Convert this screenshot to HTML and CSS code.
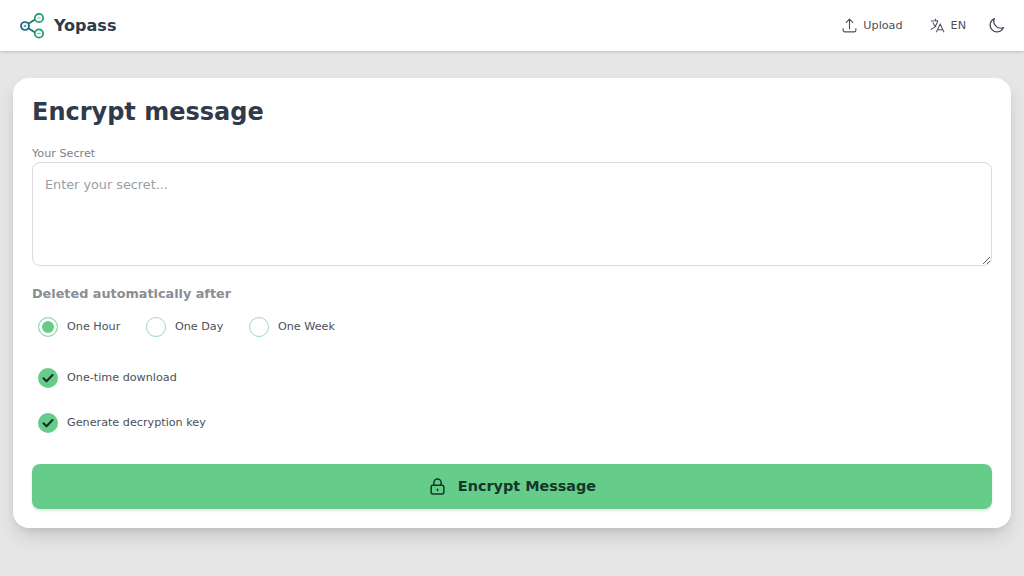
FILE: index.html
```html
<!DOCTYPE html>
<html lang="en">
<head>
<meta charset="utf-8">
<title>Yopass</title>
<link rel="stylesheet" href="styles.css">
</head>
<body>
<header class="navbar">
  <a class="brand">
    <svg class="logo" viewBox="0 0 26 26" width="26" height="26" fill="none" stroke-width="1.7">
      <path d="M8 11 L15 6.5 M8 15 L15 19.5" stroke="#1f6f6a"/>
      <circle cx="5" cy="13" r="4" stroke="#1d5f78" fill="#e3f1fa"/>
      <circle cx="19" cy="5" r="4.2" stroke="#1a9a72" fill="#f2fbf7"/>
      <circle cx="19" cy="20.5" r="4.2" stroke="#1a9a72" fill="#f2fbf7"/>
      <path d="M5 12v2" stroke="#1d5f78" stroke-width="1.2"/>
      <path d="M17.5 5h3M17.5 20.5h3" stroke="#7fbfa8" stroke-width="1"/>
    </svg>
    <span class="brand-name">Yopass</span>
  </a>
  <nav class="nav-actions">
    <a class="nav-item">
      <svg viewBox="0 0 24 24" width="17" height="17" fill="none" stroke="currentColor" stroke-width="1.6" stroke-linecap="round" stroke-linejoin="round"><path d="M3 16.5v2.3A2.2 2.2 0 0 0 5.2 21h13.6a2.2 2.2 0 0 0 2.2-2.2v-2.3M16.5 7.5 12 3 7.5 7.5M12 3v13.5"/></svg>
      <span>Upload</span>
    </a>
    <a class="nav-item">
      <svg viewBox="0 0 24 24" width="17" height="17" fill="none" stroke="currentColor" stroke-width="1.5" stroke-linecap="round" stroke-linejoin="round"><path d="m10.5 21 5.25-11.25L21 21m-9-3h7.5M3 5.6a48.5 48.5 0 0 1 6-.37m0 0c1.12 0 2.23.04 3.33.11M9 5.25V3m3.33 2.35C11.18 10.6 7.74 15 3 17.5m6.58-3.4c-1.67-1.7-3-3.7-3.8-5.9"/></svg>
      <span>EN</span>
    </a>
    <button class="theme-btn" aria-label="Theme">
      <svg viewBox="0 0 24 24" width="17" height="17" fill="none" stroke="currentColor" stroke-width="1.7" stroke-linecap="round" stroke-linejoin="round"><path d="M21.75 15A9.75 9.75 0 0 1 9 2.25 9.75 9.75 0 1 0 21.75 15Z"/></svg>
    </button>
  </nav>
</header>
<main class="page">
  <section class="card">
    <h1 class="title">Encrypt message</h1>
    <label class="field-label" for="secret">Your Secret</label>
    <textarea id="secret" class="secret" placeholder="Enter your secret..."></textarea>
    <h2 class="section-label">Deleted automatically after</h2>
    <div class="radio-row">
      <label class="option"><span class="radio checked"></span><span>One Hour</span></label>
      <label class="option"><span class="radio"></span><span>One Day</span></label>
      <label class="option"><span class="radio"></span><span>One Week</span></label>
    </div>
    <label class="option check-row first">
      <span class="check"><svg viewBox="0 0 20 20" width="20" height="20" fill="none" stroke="#1f2d28" stroke-width="2.2" stroke-linecap="round" stroke-linejoin="round"><path d="m5.5 10.3 3 3 6-6.2"/></svg></span>
      <span>One-time download</span>
    </label>
    <label class="option check-row">
      <span class="check"><svg viewBox="0 0 20 20" width="20" height="20" fill="none" stroke="#1f2d28" stroke-width="2.2" stroke-linecap="round" stroke-linejoin="round"><path d="m5.5 10.3 3 3 6-6.2"/></svg></span>
      <span>Generate decryption key</span>
    </label>
    <button class="submit">
      <svg viewBox="0 0 24 24" width="19" height="19" fill="none" stroke="currentColor" stroke-width="1.9" stroke-linecap="round" stroke-linejoin="round"><path d="M7.5 10.5V7a4.5 4.5 0 0 1 9 0v3.5"/><rect x="4" y="10.5" width="16" height="11" rx="2"/><path d="M12 15.5v1.5"/></svg>
      <span>Encrypt Message</span>
    </button>
  </section>
</main>
</body>
</html>
```
FILE: styles.css
```css
* { box-sizing: border-box; }
html, body { margin: 0; height: 100%; }
body {
  background: #e6e6e6;
  font-family: "DejaVu Sans", sans-serif;
  color: #2f3a4a;
  overflow: hidden;
}
.navbar {
  height: 51px;
  background: #fff;
  display: flex;
  align-items: center;
  justify-content: space-between;
  padding: 0 19px 0 20px;
  box-shadow: 0 1px 3px rgba(0, 0, 0, .18);
}
.brand { display: flex; align-items: center; gap: 8px; }
.logo { display: block; }
.brand-name { font-size: 16px; font-weight: 700; color: #2f3a4a; }
.nav-actions { display: flex; align-items: center; gap: 26px; color: #4a505b; font-size: 11.2px; }
.nav-item { display: flex; align-items: center; gap: 5px; }
.nav-item svg, .theme-btn svg { display: block; }
.theme-btn { border: 0; background: none; padding: 0; margin-left: -4px; color: #3f4652; }
.page { padding: 27px 13px 0; }
.card {
  height: 450px;
  background: #fff;
  border-radius: 16px;
  padding: 18px 19px 0;
  box-shadow: 0 10px 20px -4px rgba(0, 0, 0, .16), 0 4px 8px -3px rgba(0, 0, 0, .08);
}
.title { margin: 0; font-size: 24px; line-height: 32px; font-weight: 700; color: #2f3a4a; }
.field-label { display: block; margin-top: 18px; font-size: 11.2px; line-height: 16px; color: #7d828a; }
.secret {
  display: block;
  width: 100%;
  height: 104px;
  margin-top: 0;
  padding: 13px 12px;
  border: 1px solid #dcdcdc;
  border-radius: 8px;
  background: #fff;
  font-family: inherit;
  font-size: 12.8px;
  line-height: 18px;
  color: #2f3a4a;
  outline: 0;
}
.secret::placeholder { color: #9a9ea5; opacity: 1; }
.section-label { margin: 19px 0 0; font-size: 12.8px; line-height: 17px; font-weight: 700; color: #8a8d92; }
.radio-row { display: flex; gap: 25.6px; margin: 14.5px 0 0 6px; height: 20px; }
.option { display: flex; align-items: center; gap: 9px; font-size: 11.2px; line-height: 20px; color: #4a505b; }
.radio { width: 20px; height: 20px; border: 1px solid #9fd8b5; border-radius: 50%; background: #fff; }
.radio.checked { border-color: #9fd8b5; background: #66cc8a; box-shadow: inset 0 0 0 3px #fff; }
.check { width: 20px; height: 20px; border-radius: 50%; background: #66cc8a; }
.check svg { display: block; }
.check-row { margin: 25px 0 0 6px; }
.check-row.first { margin-top: 31px; }
.submit {
  display: flex;
  align-items: center;
  justify-content: center;
  gap: 11px;
  width: 100%;
  height: 45px;
  margin-top: 31px;
  border: 0;
  border-radius: 8px;
  background: #66cc8a;
  color: #14372a;
  font-family: inherit;
  font-size: 14.4px;
  font-weight: 700;
  box-shadow: 0 2px 3px rgba(0, 0, 0, .1);
}
.submit svg { display: block; }
```
